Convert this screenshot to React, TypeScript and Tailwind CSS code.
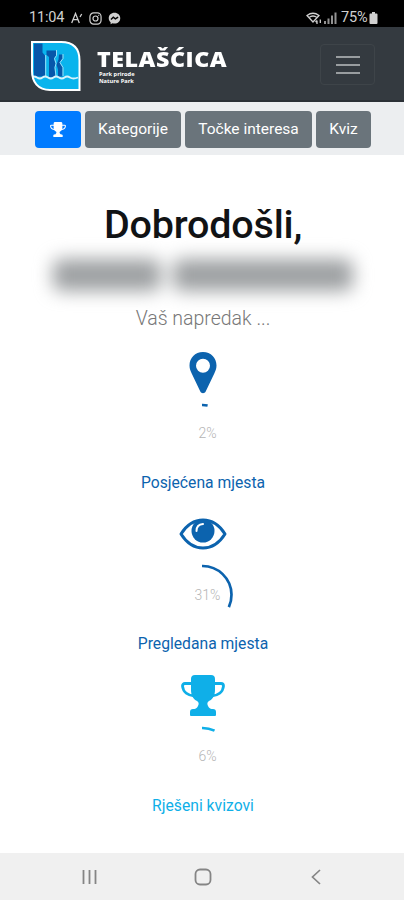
import type { ReactNode } from 'react'

type ProgressItem = {
  label: string
  percent: number
  color: string
  textClass: string
  icon: ReactNode
}

const RADIUS = 29

function TrophyIcon({ className }: { className: string }) {
  return (
    <svg viewBox="0 0 44 41" className={className} fill="currentColor">
      <path d="M14 0h16q4 0 4 4v11c0 5-2 9-6 11-2 1-2 3-1 5 1 2.500 3 3 5 3 2 0 3 1 3 3v3q0 1-1 1H10q-1 0-1-1v-3c0-2 1-3 3-3s4-.5 5-3c1-2 1-4-1-5-4-2-6-6-6-11V4q0-4 4-4Z" />
      <path d="M11 8.500H4q-2.500 0-2.500 2.500C2 17 7 20.500 14 21M33 8.500h7q2.500 0 2.500 2.500C42 17 37 20.500 30 21" fill="none" stroke="currentColor" strokeWidth="2.800" strokeLinejoin="round" />
    </svg>
  )
}

function PinIcon() {
  return (
    <svg viewBox="0 0 28 42" className="h-[42px] w-[28px]" fill="currentColor">
      <path fillRule="evenodd" d="M14 0C6 0 .5 6 .5 13.500c0 3 1 5.500 2.200 8L11.300 39.500c1 2.200 4.400 2.200 5.400 0L25.300 21.500c1.200-2.500 2.200-5 2.200-8C27.500 6 22 0 14 0Zm0 6.700a7 7 0 1 1 0 14 7 7 0 0 1 0-14Z" />
    </svg>
  )
}

function EyeIcon() {
  return (
    <svg viewBox="0 0 48 32" className="h-[32px] w-[48px]">
      <path d="M2 16C7 8 14 2 24 2s17 6 22 14c-5 8-12 14-22 14S7 24 2 16Z" fill="none" stroke="currentColor" strokeWidth="3" strokeLinejoin="round" />
      <circle cx="24" cy="13" r="11.500" fill="currentColor" />
      <path d="M17.500 13c0-4 2.500-6.700 6.500-7" fill="none" stroke="white" strokeWidth="2" strokeLinecap="round" />
    </svg>
  )
}

function BrandLogo() {
  return (
    <svg viewBox="0 0 52 52" className="h-[52px] w-[52px]">
      <path d="M1.500 1.500H31c13 0 18.500 7 18.500 19V50H20C7 50 1.500 42 1.500 31Z" fill="#09b4ed" />
      {/* cliffs */}
      <path d="M4 3.500h8.500v9l2.500 3v21H4Z" fill="#0757aa" />
      <path d="M16.500 10.500h9.500v5l-2 3 1.500 5-1 4 1 9.500h-6.500V17l-2.500-2Z" fill="#0757aa" />
      <path d="M29 14.500h3.500v4l-3 4 3 5v9H28v-7l-1.500-5 2-5Z" fill="#0757aa" />
      <path d="M26.500 10v5.500l-2 3 1.500 5-1 4 1 9M15.700 15v21M33 14v4.500l-3 4 3 5v8.500" fill="none" stroke="#bfe8fa" strokeWidth="0.800" />
      {/* water line */}
      <path d="M3 36.500q3 0 4 1 3 2 5.500 0t5.500 0 5.500 0 5.500 0 5.500 0 5.500 0 8 0" fill="none" stroke="#d8f3fc" strokeWidth="1.800" />
      <path d="M2 2H31c13 0 18.500 7 18.500 18.500V50H20C8 50 2 42 2 31Z" fill="none" stroke="white" strokeWidth="2" />
    </svg>
  )
}

function StatusBar() {
  return (
    <div className="flex h-[27px] items-center justify-between bg-black pt-[9px] pr-[26px] pl-[29px] text-[14.500px] leading-none text-[#d0d0d0]">
      <div className="flex items-center">
        <span className="w-[36px] tracking-[-0.2px]">11:04</span>
        <svg viewBox="0 0 12 12" className="ml-[6px] h-3 w-3" fill="none" stroke="currentColor" strokeWidth="1.300">
          <path d="M.7 11 4.500 1.500 8.300 11M2 7.700h5M9 5l1.700-3" />
        </svg>
        <svg viewBox="0 0 14 14" className="ml-[6px] h-[13px] w-[13px]" fill="none" stroke="currentColor" strokeWidth="1.300">
          <rect x="1" y="1" width="12" height="12" rx="4" />
          <circle cx="7" cy="7" r="2.700" />
          <path d="M10 3.700h1" />
        </svg>
        <svg viewBox="0 0 14 14" className="ml-[6px] h-[13px] w-[13px]">
          <path d="M7 .8C3.300.8.800 3.300.800 6.700c0 1.900.8 3.400 2 4.400v2.100l2-1c.7.2 1.400.3 2.200.3 3.700 0 6.200-2.500 6.200-5.800S10.700.8 7 .8Z" fill="currentColor" />
          <path d="m3.200 8.200 2.500-2.500 2.200 1.700 3-1.900" fill="none" stroke="black" strokeWidth="1.500" />
        </svg>
      </div>
      <div className="flex items-center">
        <svg viewBox="0 0 16 13" className="h-[13px] w-4" fill="none" stroke="currentColor" strokeWidth="1.300">
          <path d="M1 3.500q6-4.500 12 0L7 10ZM3 5.500q4-3 8 0" />
          <path d="M11 12V8.500M9.500 10 11 8.500M14.300 7.500V11" />
        </svg>
        <svg viewBox="0 0 13 12" className="ml-[2px] h-3 w-[13px]" fill="currentColor">
          <path opacity="0.700" d="M0 9h2v3H0ZM3.500 6.500h2V12h-2ZM7 3.500h2V12H7ZM10.500.5h2V12h-2Z" />
        </svg>
        <span className="ml-[4px] w-[28px] tracking-[-0.2px]">75%</span>
        <svg viewBox="0 0 8 12" className="h-3 w-[9px]" fill="currentColor">
          <path d="M2.500 0h3v1.500H7q1 0 1 1V11q0 1-1 1H1q-1 0-1-1V2.500q0-1 1-1h1.500Z" />
        </svg>
      </div>
    </div>
  )
}

function Header() {
  return (
    <header className="flex h-[75px] items-start border-b-2 border-[#2b3036] bg-[#343a40] pl-[30px]">
      <div className="mt-[13px]">
        <BrandLogo />
      </div>
      <div className="mt-[20px] ml-[15px] w-[140px] text-white">
        <div className="w-max origin-left scale-x-[1.080] font-['Open_Sans'] text-[21.500px] leading-[24px] font-extrabold tracking-[0.500px] whitespace-nowrap">TELAŠĆICA</div>
        <div className="-mt-px ml-[2px] font-['Open_Sans'] text-[5.700px] leading-[8px] font-bold">
          <div>Park prirode</div>
          <div className="-mt-px">Nature Park</div>
        </div>
      </div>
      <button type="button" aria-label="Menu" className="mt-[17px] ml-[83px] flex h-[41px] w-[55px] flex-col items-center justify-center gap-[6px] rounded border border-[#3e4449]">
        <span className="h-[2px] w-[24px] bg-[#999da0]" />
        <span className="h-[2px] w-[24px] bg-[#999da0]" />
        <span className="h-[2px] w-[24px] bg-[#999da0]" />
      </button>
    </header>
  )
}

function NavButtons() {
  return (
    <nav className="flex h-[53px] gap-[4px] bg-[#eceef0] pt-[9px] pl-[35px] text-[15.500px] text-white">
      <button type="button" aria-label="Napredak" className="flex h-[37px] w-[46px] items-center justify-center rounded bg-[#007bff]">
        <TrophyIcon className="h-[15px] w-[16px]" />
      </button>
      <button type="button" className="h-[37px] w-[96px] rounded bg-[#6a747b] whitespace-nowrap">Kategorije</button>
      <button type="button" className="h-[37px] w-[127px] rounded bg-[#6a747b] whitespace-nowrap">Točke interesa</button>
      <button type="button" className="h-[37px] w-[55px] rounded bg-[#6a747b]">Kviz</button>
    </nav>
  )
}

function ProgressBlock({ label, percent, color, textClass, icon }: ProgressItem) {
  const circumference = 2 * Math.PI * RADIUS
  return (
    <section className={`flex h-[161.500px] flex-col items-center ${textClass}`}>
      <div className="flex h-[48px] items-center justify-center">{icon}</div>
      <div className="mt-[5px] grid h-[64px] w-[64px] place-items-center">
        <svg viewBox="0 0 64 64" className="col-start-1 row-start-1 h-[64px] w-[64px]">
          <circle
            cx="31.500"
            cy="32"
            r={RADIUS}
            fill="none"
            stroke={color}
            strokeWidth="2.700"
            strokeDasharray={`${(circumference * percent) / 100 + 2} ${circumference}`}
            transform="rotate(-91 31.500 32)"
          />
        </svg>
        <span className="col-start-1 row-start-1 -mt-px ml-[9px] text-[14px] leading-none font-light text-[#b5b5b5]">{percent}%</span>
      </div>
      <div className="mt-[5px] text-[15.700px] leading-[24px] whitespace-nowrap">{label}</div>
    </section>
  )
}

const items: ProgressItem[] = [
  { label: 'Posjećena mjesta', percent: 2, color: '#0c63ae', textClass: 'text-[#0c63ae]', icon: <PinIcon /> },
  { label: 'Pregledana mjesta', percent: 31, color: '#0c63ae', textClass: 'text-[#0c63ae]', icon: <EyeIcon /> },
  { label: 'Rješeni kvizovi', percent: 6, color: '#0fafe8', textClass: 'text-[#0fafe8]', icon: <TrophyIcon className="h-[41px] w-[44px]" /> },
]

export default function App() {
  return (
    <div className="flex h-[900px] w-[404px] flex-col overflow-hidden bg-white font-[Roboto,sans-serif]">
      <StatusBar />
      <Header />
      <NavButtons />
      <main className="flex-1 pl-[2px]">
        <h1 className="mt-[46px] text-center text-[39.500px] leading-[48px] font-medium tracking-[-0.200px] text-[#111315]">Dobrodošli,</h1>
        {/* the user's name stays hidden */}
        <div className="flex h-[51px] items-center justify-center gap-[12px] blur-[9px]">
          <div className="h-[32px] w-[108px] rounded-lg bg-[#9da0a2]" />
          <div className="h-[32px] w-[180px] rounded-lg bg-[#9da0a2]" />
        </div>
        <p className="mt-[5px] text-center text-[19.500px] leading-[28px] font-light text-[#777]">Vaš napredak ...</p>
        <div className="mt-[15.500px]">
          {items.map((item) => <ProgressBlock key={item.label} {...item} />)}
        </div>
      </main>
      <footer className="flex h-[47px] items-center bg-[#f0f0f0] pl-[82px] text-[#858585]">
        <svg viewBox="0 0 16 16" className="h-4 w-4" stroke="currentColor" strokeWidth="1.800">
          <path d="M1.500 1v14M7.500 1v14M13.500 1v14" />
        </svg>
        <svg viewBox="0 0 18 18" className="ml-[96px] h-[18px] w-[18px]" fill="none" stroke="currentColor" strokeWidth="1.800">
          <rect x="1.500" y="1.500" width="15" height="15" rx="4.500" />
        </svg>
        <svg viewBox="0 0 10 16" className="ml-[99px] h-4 w-[10px]" fill="none" stroke="currentColor" strokeWidth="1.700">
          <path d="M9 1 1.500 8 9 15" />
        </svg>
      </footer>
    </div>
  )
}
